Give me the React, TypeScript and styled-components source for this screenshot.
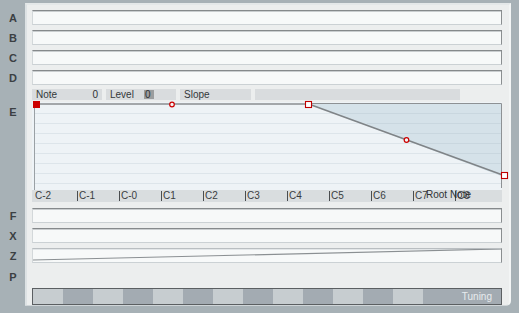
import React from "react";
import styled, { createGlobalStyle } from "styled-components";

const Global = createGlobalStyle`
  html, body { margin: 0; padding: 0; background: #a7b1b6; }
  body { font-family: "Liberation Sans", Arial, sans-serif; }
`;

const Frame = styled.div`
  display: flex;
  width: 519px;
  height: 313px;
  padding-top: 3px;
  box-sizing: border-box;
  background: #a7b1b6;
  overflow: hidden;
`;

const Sidebar = styled.div`
  width: 25px;
  display: flex;
  flex-direction: column;
  padding-top: 7px;
  box-sizing: border-box;
`;

const Letter = styled.div<{ $mt?: number }>`
  height: 15px;
  margin-top: ${(p) => p.$mt ?? 5}px;
  display: flex;
  align-items: center;
  justify-content: center;
  padding-left: 1px;
  font-weight: bold;
  font-size: 11px;
  color: #3b4043;
`;

const Panel = styled.div`
  width: 486px;
  height: 303px;
  box-sizing: border-box;
  background: #eceeee;
  border-left: 2px solid #dde2e4;
  border-top: 2px solid #e4e8e9;
  border-right: 2px solid #f3f5f5;
  border-bottom: 1px solid #cfd5d8;
  border-bottom-right-radius: 5px;
  padding: 5px 7px 0 5px;
  display: flex;
  flex-direction: column;
`;

const Field = styled.div<{ $mt?: number; $soft?: boolean }>`
  height: 15px;
  margin-top: ${(p) => p.$mt ?? 5}px;
  box-sizing: border-box;
  background: #f7f9f9;
  border-top: 1px solid ${(p) => (p.$soft ? "#b9bec1" : "#85898b")};
  border-right: 1px solid #8a8e90;
  border-left: 1px solid #d3d8da;
  border-bottom: 1px solid #cbd1d4;
  box-shadow: inset 0 1px 0 ${(p) => (p.$soft ? "#e2e6e8" : "#c9cdcf")};
  position: relative;
`;

const FieldSvg = styled.svg`
  display: block;
  width: 100%;
  height: 100%;
`;

const Header = styled.div`
  display: flex;
  gap: 4px;
  height: 11px;
  margin-top: 4px;
`;

const HeadBox = styled.div<{ $w: number }>`
  width: ${(p) => p.$w}px;
  height: 11px;
  background: #d9dcde;
  display: flex;
  align-items: center;
  padding: 0 4px;
  box-sizing: border-box;
  font-size: 10px;
  line-height: 11px;
  color: #34383a;
  justify-content: space-between;
`;

const HeadLabel = styled.span``;

const ValueChip = styled.span<{ $dark?: boolean }>`
  display: inline-block;
  width: 10px;
  height: 9px;
  line-height: 9px;
  background: ${(p) => (p.$dark ? "#9b9d9e" : "transparent")};
  color: #2e3133;
  padding-left: 1px;
  box-sizing: border-box;
  text-align: ${(p) => (p.$dark ? "left" : "right")};
`;

const LevelGroup = styled.div`
  display: flex;
  align-items: center;
  gap: 10px;
`;

const Graph = styled.div`
  height: 88px;
  margin-top: 2px;
  background: #eef3f6;
  position: relative;
`;

const GraphSvg = styled.svg`
  display: block;
  overflow: visible;
`;

const Keys = styled.div`
  height: 12px;
  background: #d9dddf;
  display: flex;
  align-items: center;
  padding-left: 3px;
  position: relative;
`;

const Key = styled.div<{ $bar?: boolean }>`
  width: 42px;
  height: 10px;
  box-sizing: border-box;
  border-left: ${(p) => (p.$bar ? "1px solid #4a4d4f" : "none")};
  padding-left: ${(p) => (p.$bar ? 1 : 0)}px;
  font-size: 10px;
  line-height: 10px;
  color: #3a3d3f;
  flex-shrink: 0;
`;

const RootNote = styled.div`
  position: absolute;
  left: 394px;
  top: 0px;
  font-size: 10px;
  line-height: 10px;
  color: #303335;
`;

const Tuning = styled.div`
  height: 17px;
  margin-top: 25px;
  box-sizing: border-box;
  border: 1px solid #5b5f62;
  display: flex;
`;

const Seg = styled.div<{ $dark?: boolean }>`
  width: 30px;
  flex-shrink: 0;
  background: ${(p) => (p.$dark ? "#a3abb2" : "#c7cdd0")};
`;

const TuningLabel = styled.div`
  flex: 1;
  background: #a3abb2;
  color: #e8ecee;
  font-size: 10px;
  display: flex;
  align-items: center;
  justify-content: flex-end;
  padding-right: 9px;
`;

const keys = ["C-2", "C-1", "C-0", "C1", "C2", "C3", "C4", "C5", "C6", "C7", "C8"];

export default function App() {
  const grid = [11, 21, 31, 41, 51, 61, 71, 81];
  return (
    <>
      <Global />
      <Frame>
        <Sidebar>
          <Letter $mt={0}>A</Letter>
          <Letter>B</Letter>
          <Letter>C</Letter>
          <Letter>D</Letter>
          <Letter $mt={19}>E</Letter>
          <Letter $mt={89}>F</Letter>
          <Letter>X</Letter>
          <Letter>Z</Letter>
          <Letter $mt={6}>P</Letter>
        </Sidebar>
        <Panel>
          <Field $mt={0} />
          <Field />
          <Field />
          <Field />
          <Header>
            <HeadBox $w={70}>
              <HeadLabel>Note</HeadLabel>
              <ValueChip>0</ValueChip>
            </HeadBox>
            <HeadBox $w={70}>
              <LevelGroup>
                <HeadLabel>Level</HeadLabel>
                <ValueChip $dark>0</ValueChip>
              </LevelGroup>
            </HeadBox>
            <HeadBox $w={71}>
              <HeadLabel>Slope</HeadLabel>
            </HeadBox>
            <HeadBox $w={205} />
          </Header>
          <Graph>
            <GraphSvg width={470} height={88} viewBox="0 0 470 88">
              {grid.map((y) => (
                <line key={y} x1={3} x2={469} y1={y + 0.5} y2={y + 0.5} stroke="#dde5ea" strokeWidth={1} />
              ))}
              <polygon points="277,2 469,2 469,74" fill="#d5e2e9" />
              {grid.map((y) =>
                y < 74 ? (
                  <line
                    key={"s" + y}
                    x1={277 + (y * 192) / 72 + 2}
                    x2={469}
                    y1={y + 0.5}
                    y2={y + 0.5}
                    stroke="#c9d7df"
                    strokeWidth={1}
                  />
                ) : null
              )}
              <line x1={2.5} y1={2} x2={2.5} y2={88} stroke="#9aa0a4" strokeWidth={1} />
              <line x1={276} y1={1.5} x2={469.5} y2={1.5} stroke="#8d9194" strokeWidth={1} />
              <line x1={469.5} y1={1.5} x2={469.5} y2={86} stroke="#8d9194" strokeWidth={1} />
              <line x1={4} y1={2} x2={276} y2={2} stroke="#8a8e91" strokeWidth={1.5} />
              <line x1={278} y1={2.5} x2={472} y2={73.5} stroke="#7f8487" strokeWidth={1.6} />
              <rect x={1} y={-1} width={7} height={7} fill="#cc0000" />
              <circle cx={140} cy={2.5} r={2.3} fill="#f4f4f4" stroke="#cc0000" strokeWidth={1.2} />
              <rect x={273.5} y={-0.5} width={6} height={6} fill="#ffffff" stroke="#c00000" strokeWidth={1.1} />
              <circle cx={374.5} cy={38} r={2.3} fill="#f4f4f4" stroke="#cc0000" strokeWidth={1.2} />
              <rect x={469.5} y={70.5} width={6} height={6} fill="#ffffff" stroke="#c00000" strokeWidth={1.1} />
            </GraphSvg>
          </Graph>
          <Keys>
            {keys.map((k, i) => (
              <Key key={k} $bar={i > 0}>
                {k}
              </Key>
            ))}
            <RootNote>Root Note</RootNote>
          </Keys>
          <Field $mt={6} />
          <Field />
          <Field $soft>
            <FieldSvg viewBox="0 0 468 13" preserveAspectRatio="none">
              <line x1={0} y1={11} x2={468} y2={0} stroke="#8b9093" strokeWidth={1.2} />
            </FieldSvg>
          </Field>
          <Tuning>
            {Array.from({ length: 13 }).map((_, i) => (
              <Seg key={i} $dark={i % 2 === 1} />
            ))}
            <TuningLabel>Tuning</TuningLabel>
          </Tuning>
        </Panel>
      </Frame>
    </>
  );
}
